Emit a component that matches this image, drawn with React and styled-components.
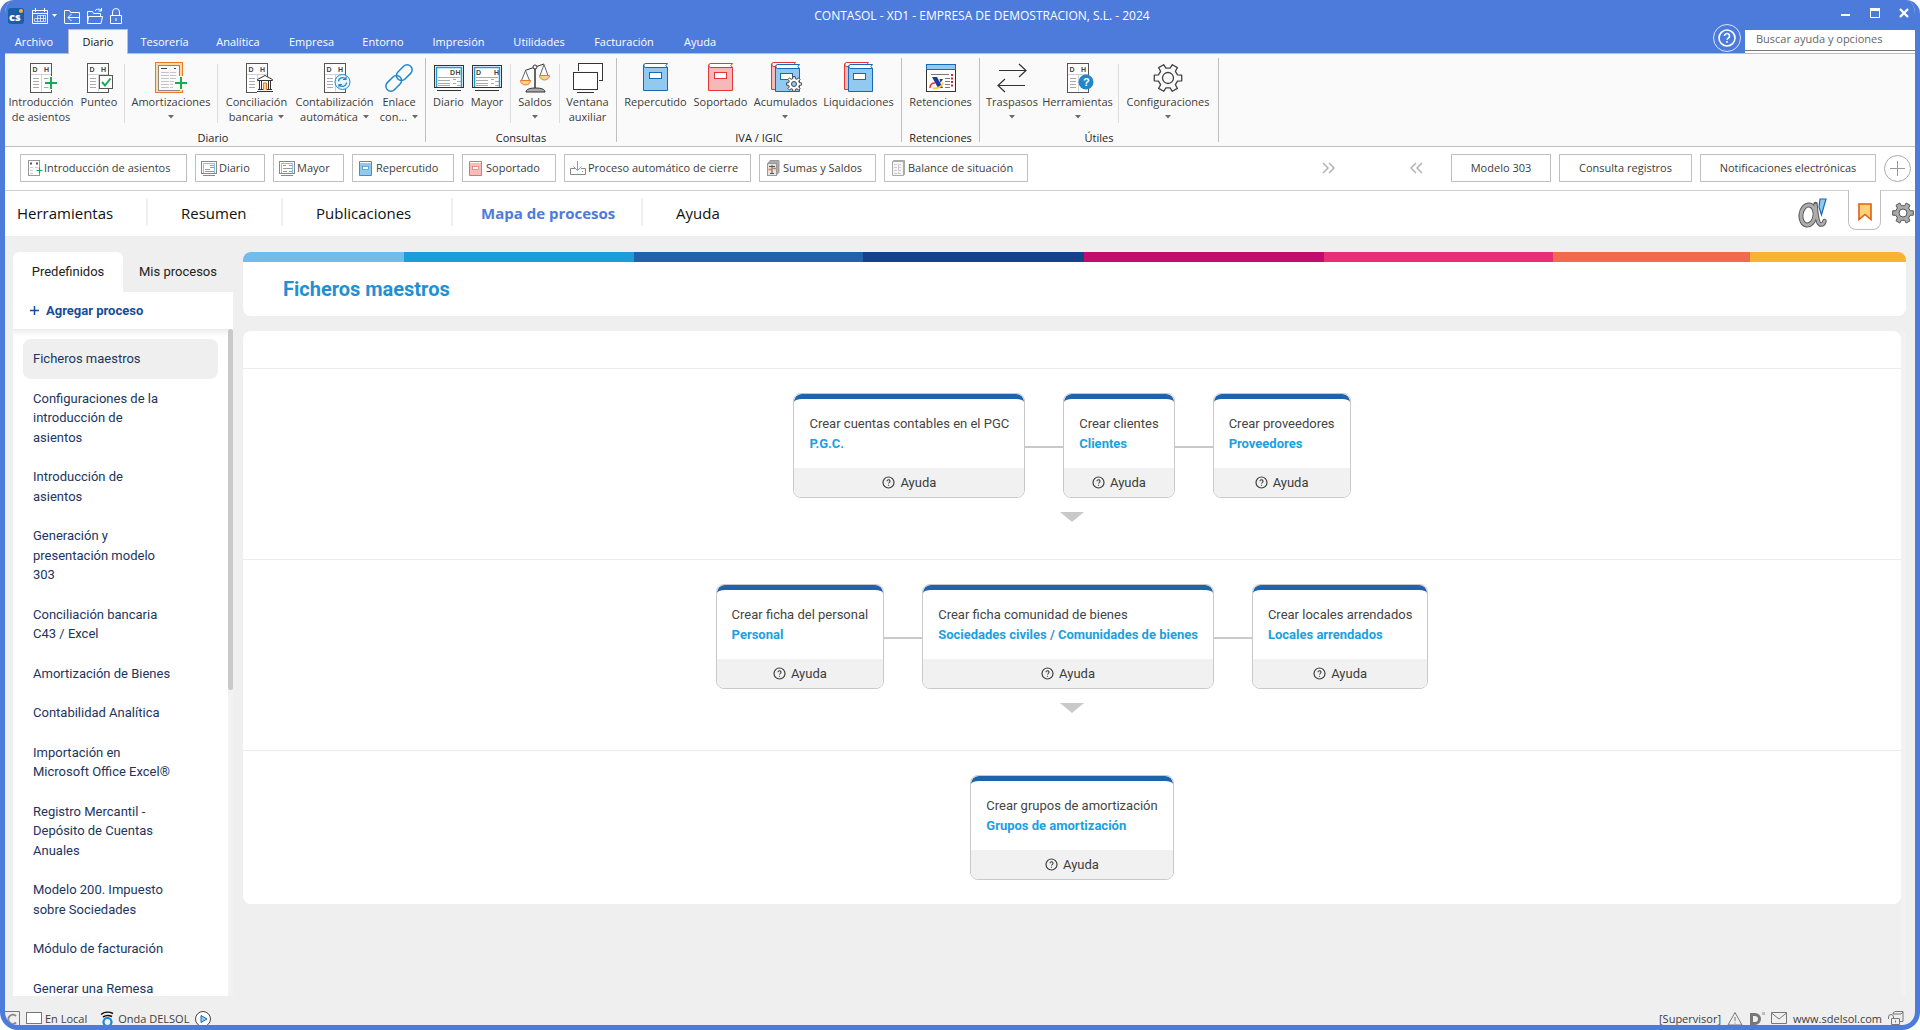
import React from "react";
import styled, { createGlobalStyle, css } from "styled-components";

const BLUE = "#4d7bdb";
const LINE = "#bfbfbf";

const GlobalStyle = createGlobalStyle`
  *, *::before, *::after { box-sizing: border-box; }
  body { margin: 0; background: #fff; }
  button, input { font: inherit; color: inherit; }
  button { margin: 0; padding: 0; border: 0; background: none; cursor: pointer; }
  a { color: inherit; text-decoration: none; }
  ul { margin: 0; padding: 0; list-style: none; }
  svg { display: block; flex: none; }
`;

const Window = styled.div`
  display: flex;
  flex-direction: column;
  height: 100vh;
  overflow: hidden;
  border: 5px solid ${BLUE};
  border-top-width: 0;
  border-radius: 14px 14px 18px 18px;
  background: #efefef;
  color: #3c3c3c;
  font: 11px/15px "Open Sans", "Noto Sans", sans-serif;
`;

/* ---------- title bar ---------- */
const Header = styled.header`
  flex: none;
  background: ${BLUE};
  color: #fff;
  border-bottom: 1px solid ${LINE};
`;
const TitleBar = styled.div`
  display: flex;
  align-items: center;
  height: 29px;
  padding-top: 2px;
`;
const QuickAccess = styled.div`
  display: flex;
  align-items: center;
  gap: 7px;
  width: 140px;
  padding-left: 3px;
`;
const WindowTitle = styled.h1`
  flex: 1;
  margin: 0;
  font-size: 12px;
  font-weight: 400;
  text-align: center;
`;
const WindowControls = styled.div`
  display: flex;
  justify-content: space-between;
  width: 96px;
  padding: 0 5px 6px 21px;
`;
const TabBar = styled.div`
  display: flex;
  align-items: flex-end;
  height: 24px;
`;
const Tabs = styled.nav`
  display: flex;
  flex: 1;
`;
const Tab = styled.button`
  height: 24px;
  width: ${(p) => p.$width}px;
  border: 1px solid transparent;
  border-bottom: 0;
  ${(p) =>
    p.$active &&
    css`
      margin: 0 0 -1px 5px;
      height: 25px;
      padding-bottom: 1px;
      background: #fafafa;
      border-color: ${LINE};
      color: #111;
    `}
`;
const HelpButton = styled.button`
  align-self: flex-start;
  margin: -5px 4px 0 0;
`;
const Search = styled.input`
  width: 170px;
  height: 23px;
  padding: 0 11px 6px;
  border: 0;
  border-radius: 0;
  background: linear-gradient(#777, #777) 0 20px / 100% 1px no-repeat #fff;
  color: #666;
  outline: none;
  &::placeholder { color: #666; opacity: 1; }
`;

/* ---------- ribbon ---------- */
const Ribbon = styled.section`
  display: flex;
  flex: none;
  height: 93px;
  background: #fafafa;
  border-bottom: 1px solid ${LINE};
`;
const RibbonGroup = styled.div`
  display: flex;
  flex-direction: column;
  justify-content: space-between;
  padding: 7px 4px 1px ${(p) => (p.$first ? 0 : 4)}px;
  background: linear-gradient(${LINE}, ${LINE}) 100% 4px / 1px 84px no-repeat;
  border-right: 1px solid transparent;
  background-origin: border-box;
`;
const GroupItems = styled.div`
  display: flex;
`;
const GroupName = styled.div`
  color: #222;
  text-align: center;
`;
const RibbonButton = styled.button`
  display: flex;
  flex-direction: column;
  align-items: center;
  width: ${(p) => p.$width}px;
  gap: 1px;
`;
const RibbonLabel = styled.span`
  display: flex;
  flex-direction: column;
  align-items: center;
  white-space: nowrap;
`;
const LabelLine = styled.span`
  display: flex;
  align-items: center;
  gap: 5px;
  height: 15px;
`;
const Divider = styled.span`
  width: 1px;
  height: 59px;
  margin: 3px 3px 0;
  background: #dcdcdc;
`;

/* ---------- shortcut bar ---------- */
const Shortcuts = styled.div`
  display: flex;
  flex: none;
  align-items: center;
  gap: 8px;
  height: 44px;
  padding: 0 4px 1px 15px;
  background: #fff;
  border-bottom: 1px solid #cfcfcf;
`;
const Shortcut = styled.button`
  display: flex;
  align-items: center;
  justify-content: ${(p) => (p.$plain ? "center" : "flex-start")};
  width: ${(p) => p.$width}px;
  height: 28px;
  padding: 0 0 1px ${(p) => (p.$plain ? 0 : 5)}px;
  border: 1px solid ${LINE};
  background: #fff;
  white-space: nowrap;
`;
const Pager = styled.div`
  display: flex;
  justify-content: space-between;
  width: 101px;
  margin: 0 20px 0 auto;
`;

/* ---------- section navigation ---------- */
const NavBar = styled.div`
  display: flex;
  flex: none;
  align-items: flex-start;
  height: 45px;
  background: #fff;
`;
const SectionNav = styled.nav`
  display: flex;
  flex: 1;
  padding-top: 7px;
`;
const NavLink = styled.a`
  width: ${(p) => p.$width}px;
  padding-left: ${(p) => p.$indent}px;
  border-right: 2px solid ${(p) => (p.$last ? "transparent" : "#efefef")};
  color: ${(p) => (p.$active ? BLUE : "#111")};
  font-size: 15px;
  font-weight: ${(p) => (p.$active ? 700 : 400)};
  line-height: 30px;
  height: 28px;
  white-space: nowrap;
`;
const NavTools = styled.div`
  display: flex;
  align-items: flex-start;
`;
const NavTool = styled.button`
  display: grid;
  place-items: center;
  width: ${(p) => p.$width}px;
  height: 44px;
`;
const BookmarkTab = styled.button`
  display: grid;
  place-items: center;
  width: 33px;
  height: 40px;
  margin: -1px 9px 0 18px;
  padding-top: 4px;
  background: #fff;
  border: 1px solid ${LINE};
  border-top: 0;
  border-radius: 0 0 8px 8px;
`;

/* ---------- work area ---------- */
const Workspace = styled.div`
  display: flex;
  flex: 1;
  min-height: 0;
  gap: 10px;
  padding: 16px 9px 0 8px;
  font-family: Roboto, "Noto Sans", sans-serif;
  font-size: 13px;
  line-height: 1.5;
`;
const Sidebar = styled.aside`
  display: flex;
  flex-direction: column;
  flex: none;
  width: 220px;
`;
const SideTabs = styled.div`
  display: flex;
`;
const SideTab = styled.button`
  width: 110px;
  height: 40px;
  border-radius: 6px 6px 0 0;
  background: ${(p) => (p.$active ? "#fff" : "transparent")};
  color: #222;
`;
const AddProcess = styled.button`
  display: flex;
  align-items: center;
  gap: 7px;
  flex: none;
  height: 37px;
  padding-left: 17px;
  background: #fff;
  color: #164c9d;
  font-weight: 700;
`;
const ProcessScroller = styled.div`
  display: flex;
  flex: 1;
  min-height: 0;
`;
const ProcessList = styled.ul`
  flex: 1;
  overflow: hidden;
  padding: 10px;
  background: linear-gradient(#ececec, #fff) 0 0 / 100% 7px no-repeat #fff;
`;
const Process = styled.li`
  border-radius: 8px;
  background: ${(p) => (p.$active ? "#efefef" : "transparent")};
  a {
    display: block;
    padding: 10px 45px 10px 10px;
    color: #1c355e;
  }
`;
const Track = styled.div`
  width: 5px;
  background: #f2f2f2;
`;
const Thumb = styled.div`
  height: 361px;
  border-radius: 3px;
  background: #c9c9c9;
`;
const Main = styled.main`
  display: flex;
  flex-direction: column;
  flex: 1;
  min-width: 0;
  gap: 15px;
`;
const TitleCard = styled.section`
  overflow: hidden;
  flex: none;
  border-radius: 8px;
  background: #fff;
`;
const Rainbow = styled.div`
  display: flex;
  height: 10px;
`;
const Stripe = styled.span`
  flex: ${(p) => p.$size};
  background: ${(p) => p.$color};
`;
const PageTitle = styled.h2`
  margin: 0;
  padding: 0 40px;
  color: #1f90d2;
  font-size: 20px;
  font-weight: 700;
  line-height: 54px;
`;
const MapScroller = styled.div`
  display: flex;
  flex: 1;
  min-height: 0;
`;
const ProcessMap = styled.section`
  flex: 1;
  align-self: flex-start;
  padding-top: 37px;
  border-radius: 8px;
  background: #fff;
`;
const MapRow = styled.div`
  display: flex;
  flex-direction: column;
  align-items: center;
  gap: 14px;
  padding: 24px 0 ${(p) => (p.$last ? 24 : 37)}px;
  border-top: 1px solid #ececec;
`;
const CardRow = styled.div`
  display: flex;
  align-items: center;
`;
const Connector = styled.span`
  width: 38px;
  height: 2px;
  margin-top: 3px;
  background: #c9c9c9;
`;
const StepCard = styled.article`
  overflow: hidden;
  border: 1px solid #c9c9c9;
  border-radius: 8px;
  background: #fff;
`;
const StepBody = styled.div`
  padding: 15px;
  border-top: 5px solid #1f63ac;
  border-radius: 8px 8px 0 0;
  color: #444;
`;
const StepLink = styled.a`
  display: block;
  color: #1ba0e0;
  font-weight: 700;
`;
const StepHelp = styled.button`
  display: flex;
  align-items: center;
  justify-content: center;
  gap: 5px;
  width: 100%;
  height: 29px;
  background: #f1f1f1;
`;

/* ---------- status bar ---------- */
const StatusBar = styled.footer`
  display: flex;
  flex: none;
  justify-content: space-between;
  height: 29px;
  padding: 15px 11px 0 0;
`;
const StatusGroup = styled.div`
  display: flex;
  gap: 6px;
`;
const StatusItem = styled.span`
  display: flex;
  gap: 3px;
  margin-right: ${(p) => p.$after || 0}px;
`;

/* ---------- icons ---------- */
const Svg = ({ w, h = w, children, ...rest }) => (
  <svg width={w} height={h} viewBox={`0 0 ${w} ${h}`} fill="none" aria-hidden="true" {...rest}>
    {children}
  </svg>
);

const Caret = () => (
  <Svg w={6} h={4}><path d="M0 0h6L3 3.5z" fill="#6a6a6a" /></Svg>
);

const gearPath = (cx, cy, r, teeth, depth) => {
  const pts = [];
  const step = (Math.PI * 2) / teeth;
  for (let i = 0; i < teeth; i++) {
    const a = i * step;
    [[-0.3, r - depth], [-0.2, r], [0.2, r], [0.3, r - depth]].forEach(([o, rad]) => {
      pts.push(`${(cx + rad * Math.cos(a + o * step)).toFixed(1)} ${(cy + rad * Math.sin(a + o * step)).toFixed(1)}`);
    });
  }
  return `M${pts.join("L")}Z`;
};

const Glyph = ({ x, y, size = 7, color = "#444", children }) => (
  <text x={x} y={y} fontSize={size} fill={color} stroke="none" fontWeight="700" fontFamily="Liberation Sans, sans-serif">
    {children}
  </text>
);

const Ledger = ({ x = 5, children }) => (
  <Svg w={32}>
    <rect x={x + 0.5} y="2.5" width="21" height="29" fill="#fff" stroke="#555" />
    <Glyph x={x + 2.5} y="11">D</Glyph>
    <Glyph x={x + 14} y="11">H</Glyph>
    <path d={`M${x + 1} 13.5h20M${x + 11.5} 13.5v17`} stroke="#d0d0d0" />
    <path d={`M${x + 3} 17.5h6M${x + 3} 20.5h6M${x + 3} 23.5h6M${x + 3} 26.5h6M${x + 14} 17.5h5M${x + 14} 26.5h5`} stroke="#aaa" />
    {children}
  </Svg>
);
const Plus = ({ x, y }) => (
  <>
    <path d={`M${x} ${y - 7}v14M${x - 7} ${y}h14`} stroke="#fafafa" strokeWidth="5" />
    <path d={`M${x} ${y - 6}v12M${x - 6} ${y}h12`} stroke="#1aab50" strokeWidth="2" />
  </>
);
const LedgerAdd = () => <Ledger><Plus x={26} y={22} /></Ledger>;
const LedgerCheck = () => (
  <Ledger x={4}>
    <rect x="16.5" y="14.5" width="13" height="13" fill="#fff" stroke="#555" />
    <path d="m19 21 3 3.500 5.500-7" stroke="#1aab50" strokeWidth="2" />
  </Ledger>
);
const Amortization = () => (
  <Svg w={32}>
    <rect x="2" y="3" width="24" height="28" fill="#fafafa" stroke="#fbd9a0" strokeWidth="3" />
    <rect x=".5" y="1.500" width="27" height="30" stroke="#e8782a" />
    <rect x="3.500" y="4.500" width="21" height="25" stroke="#888" />
    <path d="M6 7.500h6M21 7.500h-2" stroke="#444" />
    <path d="M6 11.500h15M6 14.500h15M6 17.500h15M6 20.500h15M6 23.500h12M6 26.500h12" stroke="#c4c4c4" strokeDasharray="8 1" />
    <Plus x={26} y={22} />
  </Svg>
);
const LedgerBank = () => (
  <Ledger>
    <path d="M16 20h16v12H16z" fill="#fafafa" />
    <path d="M16.500 19.500v-1L24 14.500l7.500 4v1z" fill="#fff" stroke="#333" />
    <path d="M18.500 20v8M20.500 20v8M27.500 20v8M29.500 20v8M17 28.500h14M16 30.500h16" stroke="#333" />
    <path d="M22.500 29v-7h3v7" stroke="#e8782a" fill="#fbd28a" />
  </Ledger>
);
const LedgerSync = () => (
  <Ledger>
    <circle cx="23.500" cy="21" r="7.500" fill="#eaf5fc" stroke="#1f87cc" />
    <path d="M19.500 20.500a4 4 0 0 1 7-2.500M27.500 21.500a4 4 0 0 1-7 2.500M27 15.500v3h-3M20 26.500v-3h3" stroke="#1f87cc" strokeWidth="1.200" />
  </Ledger>
);
const Chain = () => (
  <Svg w={32}>
    <g stroke="#1f87cc" strokeWidth="1.500" transform="rotate(-45 16 17)">
      <rect x="-.5" y="12" width="18" height="10" rx="5" />
      <rect x="14.500" y="12" width="18" height="10" rx="5" />
    </g>
  </Svg>
);
const Screen = ({ left }) => (
  <Svg w={32}>
    <rect x="1.500" y="4.500" width="29" height="22" fill="#fff" stroke="#333" />
    <path d="M3.500 26V6.500h25V26" stroke="#1b9ddb" strokeWidth="1.500" />
    <Glyph x={left ? 5 : 17} y="14" size={7}>D</Glyph>
    <Glyph x={left ? 23 : 22.500} y="14" size={7}>H</Glyph>
    <path d="M5 16.500h22M5 19.500h12M5 22.500h12M5 24.500h12M20 18.500h3M24 20.500h4M20 22.500h3M24 24.500h4" stroke="#aaa" />
    <path d="M4 29.500h24" stroke="#333" />
  </Svg>
);
const Scales = () => (
  <Svg w={32}>
    <path d="M16 5v22" stroke="#333" strokeWidth="1.500" />
    <path d="M6 9.500 25 3" stroke="#333" />
    <circle cx="16" cy="6" r="2" fill="#fafafa" stroke="#333" />
    <path d="m6.500 9.500-4 10M6.500 9.500l4 10M25 3.500l-4 11M25 3.500l4 11" stroke="#666" />
    <path d="M1.500 19.500h10a5 4.500 0 0 1-10 0zM20.500 14.500h10a5 4.500 0 0 1-10 0z" fill="#fdd38a" stroke="#e8782a" />
    <path d="M7 31c0-2.500 3-4 9.500-4s9.500 1.500 9.500 4z" fill="#aaa" stroke="#333" />
  </Svg>
);
const Windows = () => (
  <Svg w={32}>
    <rect x="6.500" y="2.500" width="24" height="17" fill="#fff" stroke="#333" />
    <rect x="1" y="10" width="26" height="19" fill="#fafafa" />
    <rect x="1.500" y="11.500" width="24" height="17" fill="#fff" stroke="#333" />
    <path d="M5 31.500h17" stroke="#333" />
  </Svg>
);
const BookShape = ({ fill, stroke }) => (
  <>
    <path d="M1.500 4v25.500h24v-23H4c-3 0-3-4 0-4" fill={fill} stroke={stroke} />
    <path d="M3.500 2.500h22l-1.500 2 1.500 2h-22c-2 0-2-4 0-4z" fill="#fff" stroke={stroke} />
  </>
);
const BLUES = { fill: "#92c9ef", stroke: "#1769b5" };
const REDS = { fill: "#f5b9b9", stroke: "#e33636" };
const Book = ({ palette }) => (
  <Svg w={32}>
    <g transform="translate(2 0)">
      <BookShape {...palette} />
      <rect x="7.500" y="11.500" width="12" height="6" fill="#fff" stroke={palette.stroke} />
    </g>
  </Svg>
);
const BookBlue = () => <Book palette={BLUES} />;
const BookRed = () => <Book palette={REDS} />;
const Books = ({ gear }) => (
  <Svg w={32}>
    <g transform="translate(0 -1)"><BookShape {...REDS} /></g>
    <g transform="translate(4 1)">
      <BookShape {...BLUES} />
      <rect x="6.500" y="11.500" width="12" height="6" fill="#fff" stroke={BLUES.stroke} />
    </g>
    {gear && (
      <>
        <path d={gearPath(24, 23, 7.5, 8, 2)} fill="#fff" stroke="#444" />
        <circle cx="24" cy="23" r="2.500" fill="#92c9ef" stroke="#444" />
      </>
    )}
  </Svg>
);
const BooksGear = () => <Books gear />;
const Withholding = () => (
  <Svg w={32}>
    <rect x="1.500" y="3.500" width="29" height="27" fill="#fff" stroke="#333" />
    <rect x="1.500" y="3.500" width="29" height="5" fill="#92c9ef" stroke="#1769b5" />
    <path d="M6 13.500h18M20 17.500h5M20 20.500h5M20 23.500h5M20 26.500h5" stroke="#777" />
    <path d="M27 13v14" stroke="#d23" strokeWidth="2" strokeDasharray="2 1.500" />
    <path d="M7 16h5l6 11h-5z" fill="#1b3a9a" />
    <path d="M14.500 18h3.500l-2.500 4z" fill="#1b3a9a" />
    <path d="M5 27c0-3 2-5 5-5" stroke="#e33" strokeWidth="1.500" />
    <path d="M8 27.500c5 0 9-2 10-6" stroke="#fc3" strokeWidth="1.800" />
  </Svg>
);
const Transfer = () => (
  <Svg w={32}>
    <path d="M3 9.500h27M23 3l7 6.500-7 6.500M29 24.500H2M9 18l-7 6.500L9 31" stroke="#333" strokeWidth="1.200" />
  </Svg>
);
const LedgerHelp = () => (
  <Ledger>
    <circle cx="24" cy="21" r="7.500" fill="#1f87cc" />
    <Glyph x={21} y={25} size={11} color="#fff">?</Glyph>
  </Ledger>
);
const Cog = () => (
  <Svg w={32}>
    <path d={gearPath(16, 17, 14, 6, 4)} stroke="#444" strokeWidth="1.300" strokeLinejoin="round" />
    <circle cx="16" cy="17" r="5.500" stroke="#444" strokeWidth="1.300" />
  </Svg>
);

const Mini = ({ children }) => <Svg w={18}>{children}</Svg>;
const MiniLedger = () => (
  <Mini>
    <rect x="2.500" y="1.500" width="11" height="15" fill="#fff" stroke="#999" />
    <path d="M4 4.500h2M10 4.500h2" stroke="#555" strokeWidth="2" />
    <path d="M4 8.500h3M9 8.500h3M4 11.500h3M4 14.500h3" stroke="#ccc" />
    <path d="M13.500 8.500v6M10.500 11.500h6" stroke="#1aab50" strokeWidth="1.200" />
  </Mini>
);
const MiniScreen = ({ left }) => (
  <Mini>
    <rect x=".5" y="2.500" width="15" height="12" fill="#fff" stroke="#888" />
    <path d="M2.500 14V4.500h11V14" stroke="#7cc4ea" />
    <path d={left ? "M4 6.500h3M10 6.500h3M4 9.500h9M4 12.500h4M10 12.500h3" : "M9 6.500h4M9 8.500h4M4 10.500h5M4 12.500h9"} stroke="#999" />
    <path d="M2 16.500h12" stroke="#888" />
  </Mini>
);
const MiniScreenLeft = () => <MiniScreen left />;
const MiniBook = ({ palette }) => (
  <Mini>
    <path d="M1.500 2.500h12v14h-12z" fill={palette.fill} stroke={palette.stroke} />
    <path d="M2 3.500h11" stroke="#fff" />
    <rect x="4.500" y="7.500" width="6" height="3" fill="#fff" stroke={palette.stroke} strokeWidth=".7" />
  </Mini>
);
const MiniBlue = () => <MiniBook palette={{ fill: "#92c9ef", stroke: "#4290c8" }} />;
const MiniRed = () => <MiniBook palette={{ fill: "#f7bcbc", stroke: "#ec6b6b" }} />;
const MiniInbox = () => (
  <Mini>
    <path d="M6 9.500H.5v6h15v-6H11M12 12.500h1" stroke="#888" />
    <path d="M7.500 2v9M3.500 7.500l4 4 4-4" stroke="#5aaede" />
  </Mini>
);
const MiniSums = () => (
  <Mini>
    <path d="M5 1.500h9v12l-3 3V4.500H3z" fill="#aaa" stroke="#999" />
    <rect x="2.500" y="4.500" width="9" height="12" fill="#e4e4e4" stroke="#999" />
    <path d="M7 6v8M5 14.500h4M4 7.500h6" stroke="#555" />
    <path d="M3.500 10.500h3M8 9.500h3" stroke="#e8782a" strokeWidth="1.500" />
  </Mini>
);
const MiniBalance = () => (
  <Mini>
    <path d="M2.500 2.500h11v14h-11zM13.500 2.500l1-1v14l-1 1M2.500 2.500l1-1h11" fill="#f6f6f6" stroke="#aaa" />
    <path d="M4 5.500h8M4 8.500h8M4 11.500h8M4 14.500h8M8.500 5v10" stroke="#ccc" strokeDasharray="3 1" />
  </Mini>
);

/* ---------- data ---------- */
const TABS = [
  ["Archivo", 58], ["Diario", 60], ["Tesorería", 73], ["Analítica", 74], ["Empresa", 73], ["Entorno", 70],
  ["Impresión", 81], ["Utilidades", 80], ["Facturación", 90], ["Ayuda", 62],
];

const RIBBON = [
  ["Diario", [
    [72, LedgerAdd, "Introducción", "de asientos"],
    [44, LedgerCheck, "Punteo"],
    null,
    [86, Amortization, "Amortizaciones", "", true],
    null,
    [71, LedgerBank, "Conciliación", "bancaria", true],
    [85, LedgerSync, "Contabilización", "automática", true],
    [44, Chain, "Enlace", "con...", true],
  ]],
  ["Consultas", [
    [37, Screen, "Diario"],
    [40, () => <Screen left />, "Mayor"],
    null,
    [42, Scales, "Saldos", "", true],
    null,
    [49, Windows, "Ventana", "auxiliar"],
  ]],
  ["IVA / IGIC", [
    [69, BookBlue, "Repercutido"],
    [61, BookRed, "Soportado"],
    [69, BooksGear, "Acumulados", "", true],
    [77, Books, "Liquidaciones"],
  ]],
  ["Retenciones", [[69, Withholding, "Retenciones"]]],
  ["Útiles", [
    [56, Transfer, "Traspasos", "", true],
    [75, LedgerHelp, "Herramientas", "", true],
    null,
    [92, Cog, "Configuraciones", "", true],
  ]],
];

const SHORTCUTS = [
  ["Introducción de asientos", 167, MiniLedger],
  ["Diario", 70, MiniScreen],
  ["Mayor", 71, MiniScreenLeft],
  ["Repercutido", 102, MiniBlue],
  ["Soportado", 94, MiniRed],
  ["Proceso automático de cierre", 187, MiniInbox],
  ["Sumas y Saldos", 117, MiniSums],
  ["Balance de situación", 144, MiniBalance],
];
const LINKS = [["Modelo 303", 100], ["Consulta registros", 133], ["Notificaciones electrónicas", 176]];

const SECTIONS = [
  ["Herramientas", 143, 12], ["Resumen", 135, 33], ["Publicaciones", 170, 33],
  ["Mapa de procesos", 190, 28], ["Ayuda", 90, 33],
];

const PROCESSES = [
  "Ficheros maestros", "Configuraciones de la introducción de asientos", "Introducción de asientos",
  "Generación y presentación modelo 303", "Conciliación bancaria C43 / Excel", "Amortización de Bienes",
  "Contabilidad Analítica", "Importación en Microsoft Office Excel®",
  "Registro Mercantil - Depósito de Cuentas Anuales", "Modelo 200. Impuesto sobre Sociedades",
  "Módulo de facturación", "Generar una Remesa",
];

const STRIPES = [
  [161, "#70bdeb"], [230, "#1b9ddb"], [229, "#1f63ac"], [221, "#15418e"],
  [240, "#bf0c6d"], [229, "#e72e77"], [197, "#ef6b4b"], [156, "#f9b233"],
];

const MAP = [
  [["Crear cuentas contables en el PGC", "P.G.C."], ["Crear clientes", "Clientes"], ["Crear proveedores", "Proveedores"]],
  [
    ["Crear ficha del personal", "Personal"],
    ["Crear ficha comunidad de bienes", "Sociedades civiles / Comunidades de bienes"],
    ["Crear locales arrendados", "Locales arrendados"],
  ],
  [["Crear grupos de amortización", "Grupos de amortización"]],
];

/* ---------- parts ---------- */
const TopIcons = () => (
  <QuickAccess>
    <Svg w={16}>
      <rect width="16" height="16" rx="3" fill="#1a5ea8" />
      <text x="1" y="13" fontSize="11" fontWeight="800" fill="#fff" fontFamily="Open Sans, sans-serif">cs</text>
      <circle cx="13" cy="3" r="2" fill="#f9b233" />
    </Svg>
    <Svg w={26} h={16}>
      <path d="M1.500 2.500h15v13h-15zM1 5.500h16M4.500 0v4M13.500 0v4" stroke="#fff" />
      <path d="M3.500 10.500h11M3.500 13.500h11M6.500 7.500h8M3.500 13v-2M6.500 13.500v-6M9.500 13.500v-6M12.500 13.500v-6M14.500 13.500v-6" stroke="#fff" strokeWidth=".7" />
      <path d="M21 6h5l-2.500 3z" fill="#fff" />
    </Svg>
    <Svg w={16}>
      <path d="M.5 15V2.500h5l1 2h9V15.500H.5M4 9.500h12M7.500 6 4 9.500 7.500 13" stroke="#fff" />
    </Svg>
    <Svg w={16}>
      <path d="M.5 15.500V3.500h5l1 2h7v3M.5 15.500l1-7h14l-1.500 7zM8 3c1-2 4-2.500 6-1M14.500 0v3h-3" stroke="#fff" />
    </Svg>
    <Svg w={12} h={16}>
      <path d="M.5 7.500h11v8H.5zM2.500 7.500V4a3.500 3.500 0 0 1 7 0v3.500M6 10v3" stroke="#fff" />
    </Svg>
  </QuickAccess>
);

const HelpCircle = () => (
  <Svg w={13}>
    <circle cx="6.500" cy="6.500" r="5.500" stroke="#3c3c3c" strokeWidth="1.200" />
    <path d="M5 5.300a1.500 1.500 0 1 1 2.200 1.300c-.5.300-.7.500-.7 1M6.500 8.700v1" stroke="#3c3c3c" strokeWidth="1.100" />
  </Svg>
);

const Chevrons = ({ back }) => (
  <Svg w={14} h={16} transform={back ? "scale(-1 1)" : undefined}>
    <path d="m1 3 5 5-5 5M7 3l5 5-5 5" stroke="#b5b5b5" strokeWidth="1.600" />
  </Svg>
);

const AlphaLogo = () => (
  <Svg w={30}>
    <g strokeLinecap="round">
      <ellipse cx="10" cy="17" rx="7" ry="10" transform="rotate(8 10 17)" stroke="#5c5c5c" strokeWidth="5" />
      <path d="M17.500 6c.5 8 1 14 3 18.500 1.500 3 5 3 6-1.500" stroke="#5c5c5c" strokeWidth="4.500" />
      <ellipse cx="10" cy="17" rx="7" ry="10" transform="rotate(8 10 17)" stroke="#adadad" strokeWidth="3" />
      <path d="M17.500 7c.5 7 1 13 3 17.500 1.500 3 5 3 6-1.500" stroke="#adadad" strokeWidth="2.500" />
    </g>
    <path d="M22 1h6l-4.500 16-2.500-8z" fill="#92c9ef" stroke="#1769b5" strokeWidth="1.200" />
  </Svg>
);

export default function App() {
  return (
    <Window>
      <GlobalStyle />
      <Header>
        <TitleBar>
          <TopIcons />
          <WindowTitle>CONTASOL - XD1 - EMPRESA DE DEMOSTRACION, S.L. - 2024</WindowTitle>
          <WindowControls>
            <button aria-label="Minimizar"><Svg w={12}><path d="M1 8h9" stroke="#fff" strokeWidth="2" /></Svg></button>
            <button aria-label="Maximizar">
              <Svg w={12}><path d="M1.500 1.500h9v9h-9z" stroke="#fff" /><path d="M1 2.500h10" stroke="#fff" strokeWidth="3" /></Svg>
            </button>
            <button aria-label="Cerrar"><Svg w={12}><path d="m2 2 8 8M10 2l-8 8" stroke="#fff" strokeWidth="2.200" /></Svg></button>
          </WindowControls>
        </TitleBar>
        <TabBar>
          <Tabs>
            {TABS.map(([name, width]) => (
              <Tab key={name} $width={width} $active={name === "Diario"}>{name}</Tab>
            ))}
          </Tabs>
          <HelpButton aria-label="Ayuda">
            <Svg w={28}>
              <circle cx="14" cy="14" r="13.500" stroke="#fff" strokeWidth=".8" />
              <circle cx="14" cy="14" r="8" stroke="#fff" strokeWidth="1.600" />
              <path d="M11.500 12a2.500 2.500 0 1 1 3.800 2.100c-.9.600-1.300.900-1.300 1.700M14 17v1.800" stroke="#fff" strokeWidth="1.600" />
            </Svg>
          </HelpButton>
          <Search aria-label="Buscar ayuda y opciones" placeholder="Buscar ayuda y opciones" />
        </TabBar>
      </Header>

      <Ribbon>
        {RIBBON.map(([name, items], g) => (
          <RibbonGroup key={name} $first={g === 0}>
            <GroupItems>
              {items.map((item, i) => {
                if (!item) return <Divider key={i} />;
                const [width, Icon, first, second, menu] = item;
                return (
                  <RibbonButton key={first} $width={width}>
                    <Icon />
                    <RibbonLabel>
                      <LabelLine>{first}</LabelLine>
                      {(second || menu) && <LabelLine>{second}{menu && <Caret />}</LabelLine>}
                    </RibbonLabel>
                  </RibbonButton>
                );
              })}
            </GroupItems>
            <GroupName>{name}</GroupName>
          </RibbonGroup>
        ))}
      </Ribbon>

      <Shortcuts>
        {SHORTCUTS.map(([name, width, Icon]) => (
          <Shortcut key={name} $width={width}><Icon />{name}</Shortcut>
        ))}
        <Pager>
          <button aria-label="Siguiente"><Chevrons /></button>
          <button aria-label="Anterior"><Chevrons back /></button>
        </Pager>
        {LINKS.map(([name, width]) => (
          <Shortcut key={name} $width={width} $plain>{name}</Shortcut>
        ))}
        <button aria-label="Añadir">
          <Svg w={27}>
            <circle cx="13.500" cy="13.500" r="13" stroke="#aaa" />
            <path d="M13.500 6v15M6 13.500h15" stroke="#999" />
          </Svg>
        </button>
      </Shortcuts>

      <NavBar>
        <SectionNav>
          {SECTIONS.map(([name, width, indent]) => (
            <NavLink key={name} href="#" $width={width} $indent={indent} $active={name === "Mapa de procesos"} $last={name === "Ayuda"}>
              {name}
            </NavLink>
          ))}
        </SectionNav>
        <NavTools>
          <NavTool $width={34} aria-label="Alfa"><AlphaLogo /></NavTool>
          <BookmarkTab aria-label="Marcadores">
            <Svg w={14} h={18}><path d="M1 1h12v15.500l-6-5-6 5z" fill="#fdd27a" stroke="#e0600f" strokeWidth="1.600" /></Svg>
          </BookmarkTab>
          <NavTool $width={25} aria-label="Configuración">
            <Svg w={22}>
              <path d={gearPath(11, 11, 10.5, 6, 3)} fill="#aaa" stroke="#555" strokeLinejoin="round" />
              <circle cx="11" cy="11" r="4" fill="#fff" stroke="#555" />
            </Svg>
          </NavTool>
        </NavTools>
      </NavBar>

      <Workspace>
        <Sidebar>
          <SideTabs>
            <SideTab $active>Predefinidos</SideTab>
            <SideTab>Mis procesos</SideTab>
          </SideTabs>
          <AddProcess>
            <Svg w={9}><path d="M4.500 0v9M0 4.500h9" stroke="#164c9d" strokeWidth="1.500" /></Svg>
            Agregar proceso
          </AddProcess>
          <ProcessScroller>
            <ProcessList>
              {PROCESSES.map((name, i) => (
                <Process key={name} $active={i === 0}><a href="#">{name}</a></Process>
              ))}
            </ProcessList>
            <Track><Thumb /></Track>
          </ProcessScroller>
        </Sidebar>
        <Main>
          <TitleCard>
            <Rainbow>{STRIPES.map(([size, color]) => <Stripe key={color} $size={size} $color={color} />)}</Rainbow>
            <PageTitle>Ficheros maestros</PageTitle>
          </TitleCard>
          <MapScroller>
            <ProcessMap>
              {MAP.map((row, r) => (
                <MapRow key={r} $last={r === MAP.length - 1}>
                  <CardRow>
                    {row.map(([title, link], i) => (
                      <React.Fragment key={title}>
                        {i > 0 && <Connector />}
                        <StepCard>
                          <StepBody>
                            {title}
                            <StepLink href="#">{link}</StepLink>
                          </StepBody>
                          <StepHelp><HelpCircle />Ayuda</StepHelp>
                        </StepCard>
                      </React.Fragment>
                    ))}
                  </CardRow>
                  {r < MAP.length - 1 && <Svg w={24} h={10}><path d="M0 0h24L12 10z" fill="#c9c9c9" /></Svg>}
                </MapRow>
              ))}
            </ProcessMap>
            <Track />
          </MapScroller>
        </Main>
      </Workspace>

      <StatusBar>
        <StatusGroup>
          <Svg w={15} h={16}>
            <path d="M0 .5h14.500V16" stroke="#777" />
            <path d="M11 5a4.500 4.500 0 1 0 0 6.500" stroke="#888" strokeWidth="2" />
          </Svg>
          <StatusItem $after={6}>
            <Svg w={16}><rect x=".5" y="1.500" width="15" height="11" fill="#fff" stroke="#777" /></Svg>
            En Local
          </StatusItem>
          <StatusItem>
            <Svg w={16}>
              <path d="M2 3.500c3-2.500 8-3 12-1M4 6c3-2 6-2 9-.5" stroke="#111" strokeWidth="1.600" />
              <circle cx="8.500" cy="11" r="4" stroke="#1b84d8" strokeWidth="2.200" />
            </Svg>
            Onda DELSOL
          </StatusItem>
          <Svg w={16}>
            <circle cx="8" cy="8" r="7.500" fill="#fff" stroke="#444" />
            <path d="m6 4.500 6 3.500-6 3.500z" fill="#92c9ef" stroke="#1769b5" />
          </Svg>
        </StatusGroup>
        <StatusGroup>
          [Supervisor]
          <Svg w={16}><path d="M8 1.500 15 14H1zM8 6v4M8 11.500v1" stroke="#777" /></Svg>
          <Svg w={16}>
            <path d="M2.500 3.500H6a4.500 4.500 0 0 1 0 9H2.500z" stroke="#777" strokeWidth="3" />
            <path d="M13 1h3v3h-3z" fill="#bbb" />
          </Svg>
          <Svg w={16}><path d="M.5 1.500h15v11H.5zM.5 2 8 8l7.500-6" stroke="#777" /></Svg>
          <a href="#">www.sdelsol.com</a>
          <Svg w={16}>
            <path d="M5 3V2l2-1.500h8v10h-3M5 3h8l2-2M3.500 7.500h8v6h-8zM.5 8V6a2.500 2.500 0 0 1 5 0v1.500M7.500 9.500v2" stroke="#777" />
          </Svg>
        </StatusGroup>
      </StatusBar>
    </Window>
  );
}
